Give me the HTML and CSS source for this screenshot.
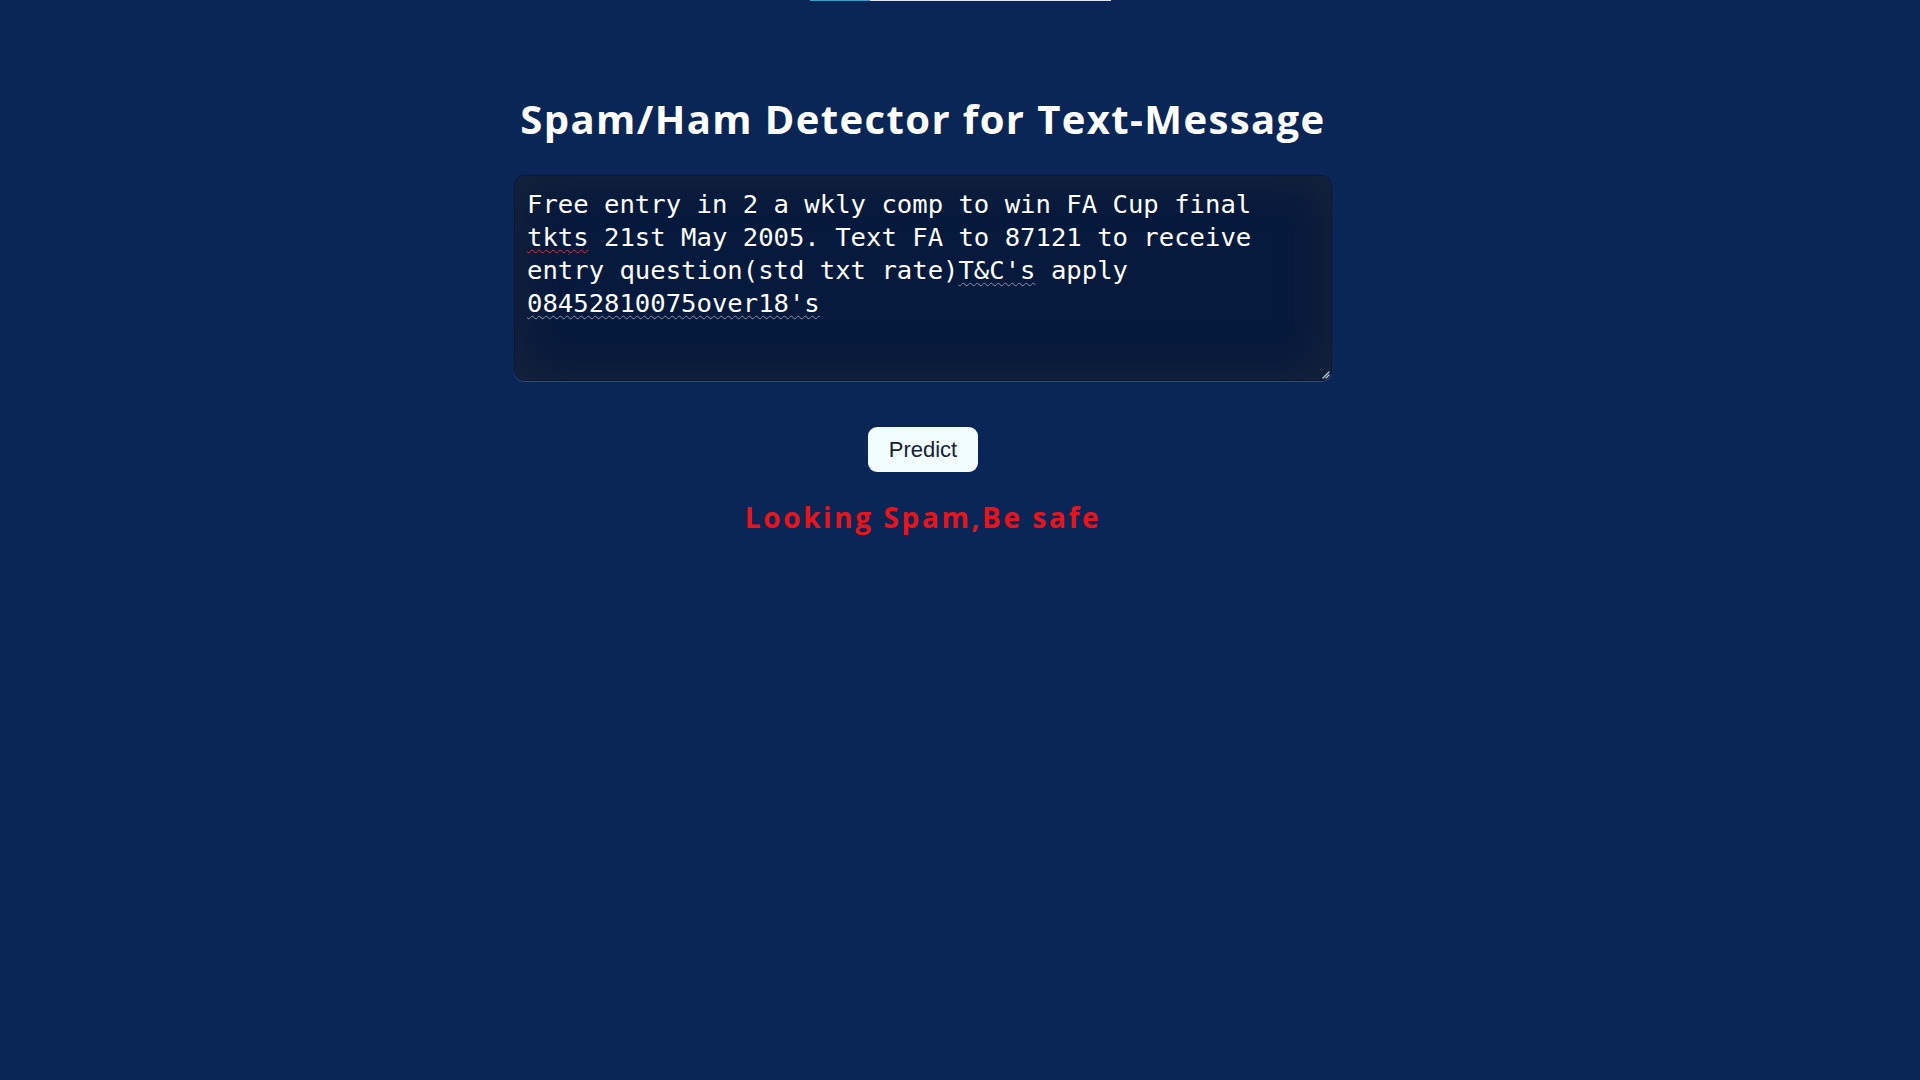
FILE: index.html
```html
<!DOCTYPE html>
<html lang="en">
<head>
<meta charset="utf-8">
<title>Spam/Ham Detector</title>
<link rel="stylesheet" href="styles.css">
</head>
<body>
  <div class="topbar"><div class="topbar-track"><div class="topbar-fill"></div></div></div>
  <main class="page">
    <h1 class="title">Spam/Ham Detector for Text-Message</h1>
    <div class="message-box" role="textbox" aria-multiline="true">Free entry in 2 a wkly comp to win FA Cup final <span class="spell">tkts</span> 21st May 2005. Text FA to 87121 to receive entry question(std txt rate)<span class="grammar">T&amp;C's</span> apply <span class="grammar">08452810075over18's</span><svg class="grip" width="10" height="10" viewBox="0 0 10 10"><path d="M9 3 L3 9 M9 6 L6 9" stroke="#b8c0cc" stroke-width="1.4" stroke-linecap="round"/></svg></div>
    <button class="predict">Predict</button>
    <p class="result">Looking Spam,Be safe</p>
  </main>
</body>
</html>
```
FILE: styles.css
```css
html, body {
  margin: 0;
  padding: 0;
  background: #092656;
  min-height: 100%;
}
body {
  font-family: "Open Sans", "Liberation Sans", sans-serif;
}
.topbar {
  display: flex;
  justify-content: center;
  height: 1px;
}
.topbar-track {
  width: 301px;
  height: 1px;
  background: #dfe6f2;
  display: flex;
}
.topbar-fill {
  width: 60px;
  height: 1px;
  background: #3b9bcf;
}
.page {
  display: flex;
  flex-direction: column;
  align-items: center;
  padding-right: 74px;
}
.title {
  margin: 91px 0 0;
  font-family: "Open Sans", sans-serif;
  font-weight: 700;
  font-size: 40px;
  line-height: 54px;
  letter-spacing: 1.4px;
  color: #ffffff;
}
.message-box {
  position: relative;
  box-sizing: border-box;
  margin-top: 29px;
  width: 818px;
  height: 206px;
  padding: 12px 21px 10px 12px;
  border: 1px solid #0a1833;
  border-radius: 10px;
  background: #061a3d;
  box-shadow: inset 0 0 42px 6px rgba(26, 36, 58, 0.85), 0 1px 0 rgba(120, 150, 200, 0.35);
  color: #ffffff;
  font-family: "DejaVu Sans Mono", "Liberation Mono", monospace;
  font-size: 25.6px;
  line-height: 33px;
  white-space: pre-wrap;
  word-wrap: break-word;
}
.spell {
  text-decoration: underline wavy #e0303a;
  text-decoration-thickness: 1px;
  text-underline-offset: 3px;
}
.grammar {
  text-decoration: underline wavy #8a94a8;
  text-decoration-thickness: 1px;
  text-underline-offset: 3px;
}
.grip {
  position: absolute;
  right: 1px;
  bottom: 1px;
}
.predict {
  margin-top: 46px;
  height: 45px;
  padding: 0 21px;
  border: none;
  border-radius: 9px;
  background: #f1fdff;
  color: #18203a;
  font-family: "Liberation Sans", Arial, sans-serif;
  font-size: 22px;
  cursor: pointer;
}
.result {
  margin: 26px 0 0;
  font-family: "Open Sans", sans-serif;
  font-weight: 700;
  font-size: 28px;
  line-height: 38px;
  letter-spacing: 2.6px;
  color: #e8141c;
}
```
